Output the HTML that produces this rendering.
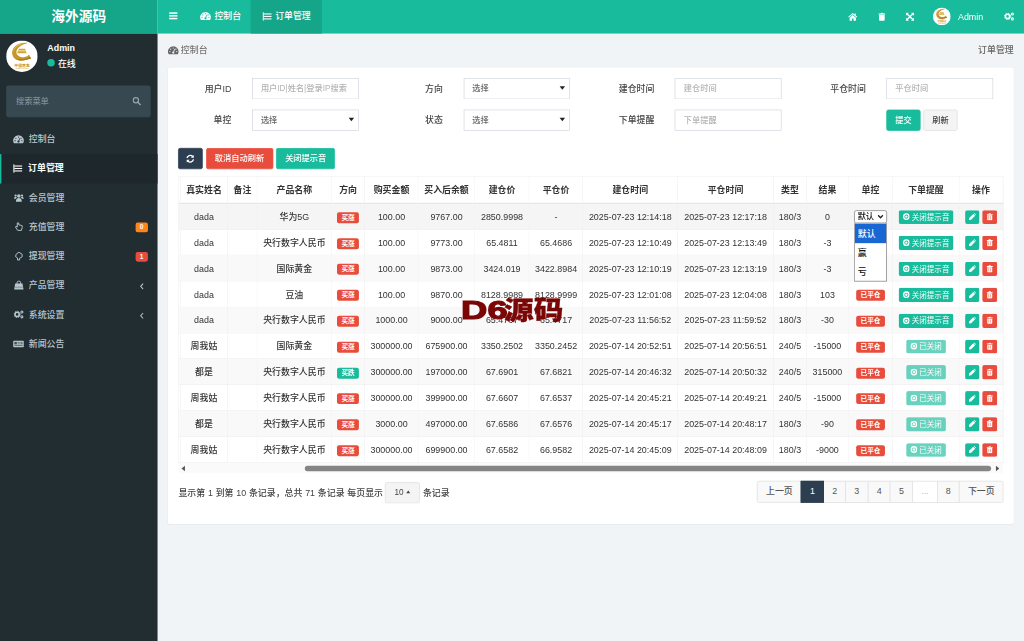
<!DOCTYPE html>
<html lang="zh-CN"><head><meta charset="utf-8"><title>海外源码</title>
<style>
html,body{margin:0;padding:0;width:1024px;height:641px;overflow:hidden;background:#f1f4f6}
#app{position:absolute;left:0;top:0;width:1495px;height:936px;transform:scale(0.684950);transform-origin:0 0;font-family:"Liberation Sans","Noto Sans CJK SC",sans-serif;font-size:13px;color:#444;line-height:1.42857;font-weight:500}
#app *{box-sizing:border-box}
.abs{position:absolute}
svg.ic{display:inline-block;vertical-align:middle}
#logo{position:absolute;left:0;top:0;width:230px;height:49.3px;background:#15a589;color:#fff;font-size:20px;font-weight:700;line-height:47.5px;text-align:center}
#nav{position:absolute;left:230px;top:0;width:1265px;height:49.3px;background:#18bc9c}
#side{position:absolute;left:0;top:49.3px;width:230px;height:887px;background:#222d32}
.tab{position:absolute;top:0;height:49.3px;line-height:47.6px;color:#fff;font-size:13px;white-space:nowrap}
.tab svg{margin-right:5px;position:relative;top:-1px}
.mi{position:absolute;left:0;width:230px;height:42.7px;color:#b8c7ce;font-size:13px;line-height:42.7px}
.mi.act{background:#1e282c;color:#fff;font-weight:700;border-left:2.5px solid #18bc9c}
.mi .mic{position:absolute;left:19px;top:0;width:16px;text-align:center}
.mi.act .mic{left:16px}
.mi .mt{position:absolute;left:42px;top:0}
.mi.act .mt{left:39px}
.mi svg.ic{position:relative;top:-1px}
.bdg{position:absolute;left:198px;top:14.5px;width:17.5px;height:14px;border-radius:3px;color:#fff;font-size:9.5px;font-weight:700;line-height:14px;text-align:center}
.chev{position:absolute;left:204px;top:17px}
#panel{position:absolute;left:245px;top:98.5px;width:1235px;height:666.2px;background:#fff;border-radius:3px;box-shadow:0 1px 1px rgba(0,0,0,.04)}
.flab{position:absolute;height:31px;line-height:31px;text-align:right;font-size:13px;color:#444;white-space:nowrap}
.fctl{position:absolute;height:31px;white-space:nowrap}
.inp{width:155.8px;height:31px;border:1px solid #d2d6de;border-radius:0;background:#fff;padding:0 12px;line-height:29px;font-size:12px;color:#b4b4b4;position:relative;overflow:hidden}
.inp em{font-style:normal;color:#666}
.inp.sel i{position:absolute;right:6px;top:11.5px;width:0;height:0;border-left:4px solid transparent;border-right:4px solid transparent;border-top:5px solid #222}
.btn{display:inline-block;height:31px;line-height:29px;padding:0 12px;font-size:12px;border:1px solid transparent;border-radius:3px;color:#fff;vertical-align:top;white-space:nowrap}
.b-g{background:#18bc9c;border-color:#18bc9c}
.b-r{background:#e74c3c;border-color:#e74c3c}
.b-k{background:#2c3e50;border-color:#2c3e50}
.b-d{background:#f4f4f4;border-color:#ddd;color:#444}
.tb{position:absolute;left:260.1px;top:257.3px;border-collapse:separate;border-spacing:0;table-layout:fixed;font-size:13px;color:#333;border-top:1px solid #efefef;border-left:1px solid #efefef}
.tb th,.tb td{border-right:1px solid #f0f0f0;border-bottom:1px solid #f0f0f0;text-align:center;white-space:nowrap;padding:0;overflow:hidden;vertical-align:middle}
.tb th{height:39.5px;font-weight:700;color:#333;border-bottom:2px solid #e6e6e6;background:#fff;padding-top:2.5px}
.tb td{height:37.79px;padding-top:2.8px}
.tb tr.odd td{background:#f9f9f9}
.tb tr.hov td{background:#f5f5f5}
.tb tr.even td{background:#fff}
.tb tr.odd td.sl{border-right-color:transparent}
.lb{display:inline-block;font-size:9.75px;font-weight:700;color:#fff;line-height:1;padding:2.9px 6.1px 3.3px;border-radius:3px;vertical-align:middle}
.lb-r{background:#e74c3c}
.lb-g{background:#18bc9c}
.bx{display:inline-block;height:20.8px;line-height:18.8px;position:relative;top:-0.6px;border-radius:3px;color:#fff;font-size:11px;padding:0 5px;vertical-align:middle;border:1px solid transparent;white-space:nowrap}
.bx b{font-weight:400;margin-left:3px;vertical-align:middle}
.bx svg.ic{position:relative;top:-1px}
.bx-g{background:#18bc9c}
.bx-r{background:#e74c3c}
.bx.off{opacity:.65}
.bx.sq{width:21.3px;padding:0;text-align:center}
.nsel{display:inline-block;position:relative;border:1px solid #767676;border-radius:3px;background:#fff;width:47.4px;height:19.2px;line-height:17.2px;font-size:12px;color:#111;padding:0 0 0 4px;text-align:left;vertical-align:middle;top:-1.2px}
.pg{position:absolute;top:701.5px;height:32px;line-height:28.4px;border:1px solid #ddd;text-align:center;background:#f9f9f9;color:#555;font-size:13px;vertical-align:top}
.pg.act{background:#2c3e50;border-color:#2c3e50;color:#fff;z-index:2}
.pg.dis{background:#fff;color:#bbb}
.pg.first{border-radius:3px 0 0 3px}
.pg.last{border-radius:0 3px 3px 0}
</style></head><body>
<div id="app">
<div id="nav">
  <div class="abs" style="left:16px;top:16.3px;line-height:0"><svg class="ic" width="14" height="14" viewBox="0 0 14 14" style=""><rect x="1" y="2" width="12" height="2.2" fill="#fff"/><rect x="1" y="6" width="12" height="2.2" fill="#fff"/><rect x="1" y="10" width="12" height="2.2" fill="#fff"/></svg></div>
  <div class="tab" style="left:62px"><svg class="ic" width="16" height="15" viewBox="0 0 15 14" style=""><path d="M7.5 1.4 A7.2 7.2 0 0 0 1.3 12.4 L13.7 12.4 A7.2 7.2 0 0 0 7.5 1.4Z" fill="#fff"/><circle cx="7.5" cy="3.8" r="0.8" fill="#18bc9c"/><circle cx="3.9" cy="5.4" r="0.8" fill="#18bc9c"/><circle cx="11.1" cy="5.4" r="0.8" fill="#18bc9c"/><circle cx="2.8" cy="8.7" r="0.8" fill="#18bc9c"/><circle cx="12.2" cy="8.7" r="0.8" fill="#18bc9c"/><path d="M9.4 5.4 L7.9 9.2" stroke="#18bc9c" stroke-width="1.1" stroke-linecap="round"/><circle cx="7.5" cy="10" r="1.5" fill="#18bc9c"/></svg>控制台</div>
  <div class="tab" style="left:135.7px;width:104.3px;background:#15a589;padding-left:17px"><svg class="ic" width="14" height="14" viewBox="0 0 14 14" style=""><rect x="0.5" y="1" width="1.6" height="12" fill="#fff"/><rect x="2" y="2.6" width="11.5" height="1.6" fill="#fff"/><rect x="2" y="6.2" width="11.5" height="1.6" fill="#fff"/><rect x="2" y="9.8" width="11.5" height="1.6" fill="#fff"/></svg>订单管理</div>
  <div class="abs" style="left:1008px;top:18px;line-height:0"><svg class="ic" width="14" height="13" viewBox="0 0 14 13" style=""><path d="M7 0.8 L0.4 6.6 L1.4 7.6 L7 2.9 L12.6 7.6 L13.6 6.6 L11.4 4.6 L11.4 1.6 L9.8 1.6 L9.8 3.2 Z" fill="#fff"/><path d="M7 4 L2.4 7.9 L2.4 12.2 L5.8 12.2 L5.8 9 L8.2 9 L8.2 12.2 L11.6 12.2 L11.6 7.9 Z" fill="#fff"/></svg></div>
  <div class="abs" style="left:1052px;top:18px;line-height:0"><svg class="ic" width="11" height="13" viewBox="0 0 11 13" style=""><path d="M3.6 1.6 L4.2 0.6 L6.8 0.6 L7.4 1.6 L10.4 1.6 L10.4 3 L0.6 3 L0.6 1.6 Z" fill="#fff"/><path d="M1.4 3.6 L9.6 3.6 L9.6 11.2 A1.2 1.2 0 0 1 8.4 12.4 L2.6 12.4 A1.2 1.2 0 0 1 1.4 11.2 Z" fill="#fff"/></svg></div>
  <div class="abs" style="left:1091.5px;top:18px;line-height:0"><svg class="ic" width="13" height="13" viewBox="0 0 13 13" style=""><path d="M0.6 0.6 L5 0.6 L3.5 2.1 L6.5 5.1 L9.5 2.1 L8 0.6 L12.4 0.6 L12.4 5 L10.9 3.5 L7.9 6.5 L10.9 9.5 L12.4 8 L12.4 12.4 L8 12.4 L9.5 10.9 L6.5 7.9 L3.5 10.9 L5 12.4 L0.6 12.4 L0.6 8 L2.1 9.5 L5.1 6.5 L2.1 3.5 L0.6 5 Z" fill="#fff"/></svg></div>
  <div class="abs" style="left:1132.3px;top:11.3px"><svg width="26" height="26" viewBox="0 0 45 45" style="display:block"><circle cx="22.5" cy="22.5" r="22.5" fill="#fff"/><path d="M31 3.6 C17 1.5 7.5 10 8.6 19 C9.6 27 18 30.6 26 28.4 L35.5 25.8 L32.6 20.2 C29.5 24.5 22.5 25.6 17.4 22 C11.5 17.5 14.5 7.5 31 3.6Z" fill="#c8952c"/><path d="M27 4 C17 3 10 10 10.2 18 C11 11 17 6 27 4Z" fill="#e6c15a"/><path d="M14 25.5 C18 29.5 24 29.6 35.5 25.8 L34.4 23.6 C27 27.5 19 28 14 25.5Z" fill="#a8761a"/><path d="M18.2 11.8 L27 11.8 L29.2 18.4 L15.6 18.4Z" fill="#d4a437"/><path d="M17.4 14.2 L28 14.2 L28.4 15.4 L17 15.4Z" fill="#f3e2a0"/><text x="22.7" y="37.4" text-anchor="middle" font-size="5.6" font-weight="700" fill="#c8952c" font-family="'Liberation Sans','Noto Sans CJK SC',sans-serif">中国黄金</text><text x="22.7" y="41.4" text-anchor="middle" font-size="3" font-weight="700" fill="#d4a437" font-family="'Liberation Sans',sans-serif">CHINA GOLD</text></svg></div>
  <div class="abs" style="left:1168.6px;top:0;line-height:50px;color:#fff;font-size:13px">Admin</div>
  <div class="abs" style="left:1236px;top:17px;line-height:0"><svg class="ic" width="15" height="14" viewBox="0 0 15 14" style=""><circle cx="5" cy="7" r="3.1" fill="none" stroke="#fff" stroke-width="2.3"/><circle cx="5" cy="7" r="4.6" fill="none" stroke="#fff" stroke-width="1.4" stroke-dasharray="1.8 1.8"/><circle cx="12" cy="3.4" r="1.5" fill="none" stroke="#fff" stroke-width="1.5"/><circle cx="12" cy="10.6" r="1.5" fill="none" stroke="#fff" stroke-width="1.5"/></svg></div>
</div>
<div id="logo">海外源码</div>
<div id="side">
  <div class="abs" style="left:8.7px;top:9.9px"><svg width="46" height="46" viewBox="0 0 45 45" style="display:block"><circle cx="22.5" cy="22.5" r="22.5" fill="#fff"/><path d="M31 3.6 C17 1.5 7.5 10 8.6 19 C9.6 27 18 30.6 26 28.4 L35.5 25.8 L32.6 20.2 C29.5 24.5 22.5 25.6 17.4 22 C11.5 17.5 14.5 7.5 31 3.6Z" fill="#c8952c"/><path d="M27 4 C17 3 10 10 10.2 18 C11 11 17 6 27 4Z" fill="#e6c15a"/><path d="M14 25.5 C18 29.5 24 29.6 35.5 25.8 L34.4 23.6 C27 27.5 19 28 14 25.5Z" fill="#a8761a"/><path d="M18.2 11.8 L27 11.8 L29.2 18.4 L15.6 18.4Z" fill="#d4a437"/><path d="M17.4 14.2 L28 14.2 L28.4 15.4 L17 15.4Z" fill="#f3e2a0"/><text x="22.7" y="37.4" text-anchor="middle" font-size="5.6" font-weight="700" fill="#c8952c" font-family="'Liberation Sans','Noto Sans CJK SC',sans-serif">中国黄金</text><text x="22.7" y="41.4" text-anchor="middle" font-size="3" font-weight="700" fill="#d4a437" font-family="'Liberation Sans',sans-serif">CHINA GOLD</text></svg></div>
  <div class="abs" style="left:69px;top:13.1px;color:#fff;font-weight:700;font-size:13px">Admin</div>
  <div class="abs" style="left:69.3px;top:37.2px;width:11px;height:11px;border-radius:50%;background:#18bc9c"></div>
  <div class="abs" style="left:84.5px;top:35.9px;color:#fff;font-size:13px">在线</div>
  <div class="abs" style="left:8.8px;top:75.7px;width:211.6px;height:46.5px;background:#374850;border-radius:3px">
     <span class="abs" style="left:14.5px;top:0;line-height:46.5px;font-size:12px;color:#7d8c94">搜索菜单</span>
     <span class="abs" style="left:184px;top:16px;line-height:0"><svg class="ic" width="13" height="13" viewBox="0 0 13 13" style=""><circle cx="5.4" cy="5.4" r="3.8" fill="none" stroke="#97a5ad" stroke-width="1.7"/><path d="M8.3 8.3 L11.8 11.8" stroke="#97a5ad" stroke-width="2" stroke-linecap="round"/></svg></span>
  </div>
</div>
<div id="menu" class="abs" style="left:0;top:0"><div class="mi" style="top:182.6px"><span class="mic"><svg class="ic" width="16" height="15" viewBox="0 0 15 14" style=""><path d="M7.5 1.4 A7.2 7.2 0 0 0 1.3 12.4 L13.7 12.4 A7.2 7.2 0 0 0 7.5 1.4Z" fill="#b8c7ce"/><circle cx="7.5" cy="3.8" r="0.8" fill="#222d32"/><circle cx="3.9" cy="5.4" r="0.8" fill="#222d32"/><circle cx="11.1" cy="5.4" r="0.8" fill="#222d32"/><circle cx="2.8" cy="8.7" r="0.8" fill="#222d32"/><circle cx="12.2" cy="8.7" r="0.8" fill="#222d32"/><path d="M9.4 5.4 L7.9 9.2" stroke="#222d32" stroke-width="1.1" stroke-linecap="round"/><circle cx="7.5" cy="10" r="1.5" fill="#222d32"/></svg></span><span class="mt">控制台</span></div><div class="mi act" style="top:225.3px"><span class="mic"><svg class="ic" width="14" height="14" viewBox="0 0 14 14" style=""><rect x="0.5" y="1" width="1.6" height="12" fill="#fff"/><rect x="2" y="2.6" width="11.5" height="1.6" fill="#fff"/><rect x="2" y="6.2" width="11.5" height="1.6" fill="#fff"/><rect x="2" y="9.8" width="11.5" height="1.6" fill="#fff"/></svg></span><span class="mt">订单管理</span></div><div class="mi" style="top:268.0px"><span class="mic"><svg class="ic" width="15" height="14" viewBox="0 0 15 14" style=""><circle cx="7.5" cy="4.2" r="2.6" fill="#b8c7ce"/><path d="M3.2 12.5 C3.2 8.5 5 7.2 7.5 7.2 C10 7.2 11.8 8.5 11.8 12.5 Z" fill="#b8c7ce"/><circle cx="2.8" cy="3.6" r="1.7" fill="#b8c7ce"/><circle cx="12.2" cy="3.6" r="1.7" fill="#b8c7ce"/><path d="M0.3 8.3 C0.3 6.3 1.3 5.6 2.8 5.6 C3.6 5.6 4.2 5.8 4.6 6.2 C3.6 6.8 3.1 7.6 2.9 8.3Z" fill="#b8c7ce"/><path d="M14.7 8.3 C14.7 6.3 13.7 5.6 12.2 5.6 C11.4 5.6 10.8 5.8 10.4 6.2 C11.4 6.8 11.9 7.6 12.1 8.3Z" fill="#b8c7ce"/></svg></span><span class="mt">会员管理</span></div><div class="mi" style="top:310.7px"><span class="mic"><svg class="ic" width="13" height="14" viewBox="0 0 13 14" style=""><path d="M4.2 1.5 L4.2 7.5 L2.6 6.3 L1.5 7.4 L4.8 12.3 L10.3 12.3 L11.4 8 L11.4 5.6 L9.8 5 L8.4 4.6 L6.4 4.4 L6.4 1.5 Z" fill="none" stroke="#b8c7ce" stroke-width="1.4" stroke-linejoin="round"/></svg></span><span class="mt">充值管理</span><span class="bdg" style="background:#ff851b">0</span></div><div class="mi" style="top:353.4px"><span class="mic"><svg class="ic" width="13" height="14" viewBox="0 0 13 14" style=""><path d="M6.5 1.2 L11.3 4.2 L11.3 8 L7.6 10 L7.6 12.6 L4.6 12.6 L4.6 9.6 L1.7 7.6 L2.6 4.2 Z" fill="none" stroke="#b8c7ce" stroke-width="1.4" stroke-linejoin="round"/></svg></span><span class="mt">提现管理</span><span class="bdg" style="background:#e74c3c">1</span></div><div class="mi" style="top:396.1px"><span class="mic"><svg class="ic" width="15" height="15" viewBox="0 0 14 14" style=""><path d="M2 4.6 L12 4.6 L13.4 12.8 L0.6 12.8 Z" fill="#b8c7ce"/><path d="M4.6 6.2 L4.6 3.6 A2.4 2.4 0 0 1 9.4 3.6 L9.4 6.2" fill="none" stroke="#b8c7ce" stroke-width="1.3"/><path d="M1.3 9.6 L12.7 9.6" stroke="#222d32" stroke-width="0.7" opacity=".7"/></svg></span><span class="mt">产品管理</span><svg class="chev" width="6" height="10" viewBox="0 0 6 10"><path d="M5 1 L1.4 5 L5 9" fill="none" stroke="#b8c7ce" stroke-width="1.5"/></svg></div><div class="mi" style="top:438.8px"><span class="mic"><svg class="ic" width="15" height="14" viewBox="0 0 15 14" style=""><circle cx="5" cy="7" r="3.1" fill="none" stroke="#b8c7ce" stroke-width="2.3"/><circle cx="5" cy="7" r="4.6" fill="none" stroke="#b8c7ce" stroke-width="1.4" stroke-dasharray="1.8 1.8"/><circle cx="12" cy="3.4" r="1.5" fill="none" stroke="#b8c7ce" stroke-width="1.5"/><circle cx="12" cy="10.6" r="1.5" fill="none" stroke="#b8c7ce" stroke-width="1.5"/></svg></span><span class="mt">系统设置</span><svg class="chev" width="6" height="10" viewBox="0 0 6 10"><path d="M5 1 L1.4 5 L5 9" fill="none" stroke="#b8c7ce" stroke-width="1.5"/></svg></div><div class="mi" style="top:481.5px"><span class="mic"><svg class="ic" width="16" height="14" viewBox="0 0 16 14" style=""><rect x="0.3" y="2.4" width="15.4" height="9.6" rx="1" fill="#b8c7ce"/><rect x="2" y="4.2" width="3.6" height="3.6" fill="#222d32" opacity=".8"/><rect x="6.8" y="4.4" width="3" height="1" fill="#222d32" opacity=".8"/><rect x="6.8" y="6.6" width="3" height="1" fill="#222d32" opacity=".8"/><rect x="11" y="4.2" width="3" height="3.6" fill="#222d32" opacity=".55"/><rect x="2" y="9.2" width="12" height="1" fill="#222d32" opacity=".8"/></svg></span><span class="mt">新闻公告</span></div></div>

<div class="abs" style="left:245px;top:64px;line-height:18px;color:#777;font-size:13px"><svg class="ic" width="16" height="15" viewBox="0 0 15 14" style=""><path d="M7.5 1.4 A7.2 7.2 0 0 0 1.3 12.4 L13.7 12.4 A7.2 7.2 0 0 0 7.5 1.4Z" fill="#666"/><circle cx="7.5" cy="3.8" r="0.8" fill="#f1f4f6"/><circle cx="3.9" cy="5.4" r="0.8" fill="#f1f4f6"/><circle cx="11.1" cy="5.4" r="0.8" fill="#f1f4f6"/><circle cx="2.8" cy="8.7" r="0.8" fill="#f1f4f6"/><circle cx="12.2" cy="8.7" r="0.8" fill="#f1f4f6"/><path d="M9.4 5.4 L7.9 9.2" stroke="#f1f4f6" stroke-width="1.1" stroke-linecap="round"/><circle cx="7.5" cy="10" r="1.5" fill="#f1f4f6"/></svg><span style="margin-left:3px;vertical-align:middle">控制台</span></div>
<div class="abs" style="left:1380px;width:100px;text-align:right;top:64px;line-height:18px;color:#666;font-size:13px">订单管理</div>

<div id="panel"></div>
<div class="flab" style="left:260.00px;top:113.60000000000001px;width:77.90px">用户ID</div><div class="fctl" style="left:367.90px;top:113.9px"><div class="inp"><span>用户ID|姓名|登录IP搜索</span></div></div><div class="flab" style="left:568.75px;top:113.60000000000001px;width:77.90px">方向</div><div class="fctl" style="left:676.65px;top:113.9px"><div class="inp sel"><em>选择</em><i></i></div></div><div class="flab" style="left:877.50px;top:113.60000000000001px;width:77.90px">建仓时间</div><div class="fctl" style="left:985.40px;top:113.9px"><div class="inp"><span>建仓时间</span></div></div><div class="flab" style="left:1186.25px;top:113.60000000000001px;width:77.90px">平仓时间</div><div class="fctl" style="left:1294.15px;top:113.9px"><div class="inp"><span>平仓时间</span></div></div><div class="flab" style="left:260.00px;top:159.6px;width:77.90px">单控</div><div class="fctl" style="left:367.90px;top:159.9px"><div class="inp sel"><em>选择</em><i></i></div></div><div class="flab" style="left:568.75px;top:159.6px;width:77.90px">状态</div><div class="fctl" style="left:676.65px;top:159.9px"><div class="inp sel"><em>选择</em><i></i></div></div><div class="flab" style="left:877.50px;top:159.6px;width:77.90px">下单提醒</div><div class="fctl" style="left:985.40px;top:159.9px"><div class="inp"><span>下单提醒</span></div></div><div class="flab" style="left:1186.25px;top:159.6px;width:77.90px"></div><div class="fctl" style="left:1294.15px;top:159.9px"><span class="btn b-g">提交</span><span class="btn b-d" style="margin-left:4px">刷新</span></div>
<div class="abs" style="left:260px;top:216px;white-space:nowrap">
  <span class="btn b-k" style="width:36.3px;padding:0;text-align:center"><svg class="ic" width="13.5" height="13.5" viewBox="0 0 12 12" style=""><path d="M10.6 1 L10.6 4.8 L6.8 4.8 L8.2 3.4 A3.4 3.4 0 0 0 2.7 5.2 L0.9 5.2 A5.2 5.2 0 0 1 9.5 2.1 Z" fill="#fff"/><path d="M1.4 11 L1.4 7.2 L5.2 7.2 L3.8 8.6 A3.4 3.4 0 0 0 9.3 6.8 L11.1 6.8 A5.2 5.2 0 0 1 2.5 9.9 Z" fill="#fff"/></svg></span><span class="btn b-r" style="margin-left:4.4px">取消自动刷新</span><span class="btn b-g" style="margin-left:4.6px;padding:0 12px">关闭提示音</span>
</div>
<table class="tb" style="width:1203.59px"><colgroup><col style="width:2.77px"><col style="width:68.91px"><col style="width:43.21px"><col style="width:108.62px"><col style="width:48.32px"><col style="width:78.40px"><col style="width:82.20px"><col style="width:79.86px"><col style="width:77.96px"><col style="width:138.70px"><col style="width:139.57px"><col style="width:48.62px"><col style="width:60.73px"><col style="width:64.97px"><col style="width:97.09px"><col style="width:63.65px"></colgroup><thead><tr><th class="sl"></th><th>真实姓名</th><th>备注</th><th>产品名称</th><th>方向</th><th>购买金额</th><th>买入后余额</th><th>建仓价</th><th>平仓价</th><th>建仓时间</th><th>平仓时间</th><th>类型</th><th>结果</th><th>单控</th><th>下单提醒</th><th>操作</th></tr></thead><tbody><tr class="odd hov"><td class="sl"></td><td>dada</td><td></td><td>华为5G</td><td><span class="lb lb-r">买涨</span></td><td>100.00</td><td>9767.00</td><td>2850.9998</td><td>-</td><td>2025-07-23 12:14:18</td><td>2025-07-23 12:17:18</td><td>180/3</td><td>0</td><td><span class="nsel">默认<svg width="9" height="7" viewBox="0 0 9 7" style="position:absolute;right:3.5px;top:5.5px"><path d="M1 1.3 L4.5 4.9 L8 1.3" fill="none" stroke="#222" stroke-width="1.9"/></svg></span></td><td><span class="bx bx-g"><svg class="ic" width="10.5" height="10.5" viewBox="0 0 11 11" style=""><circle cx="5.5" cy="5.5" r="4.15" fill="none" stroke="#fff" stroke-width="2.1"/><circle cx="5.5" cy="5.5" r="1.8" fill="#fff"/></svg><b>关闭提示音</b></span></td><td><span class="bx bx-g sq"><svg class="ic" width="11" height="11" viewBox="0 0 11 11" style=""><path d="M0.6 10.4 L1 7.2 L6.9 1.3 L9.7 4.1 L3.8 10 Z" fill="#fff"/><path d="M7.6 0.6 L8.3 0 L11 2.7 L10.4 3.4 Z" fill="#fff"/></svg></span><span class="bx bx-r sq" style="margin-left:4px"><svg class="ic" width="10" height="11" viewBox="0 0 11 13" style=""><path d="M3.4 1.8 L4.1 0.4 L6.9 0.4 L7.6 1.8 L10.6 1.8 L10.6 3.2 L0.4 3.2 L0.4 1.8 Z" fill="#fff"/><path d="M1.2 3.8 L9.8 3.8 L9.8 11.4 A1.2 1.2 0 0 1 8.6 12.6 L2.4 12.6 A1.2 1.2 0 0 1 1.2 11.4 Z" fill="#fff"/><rect x="3.3" y="5.2" width="1.1" height="5.6" fill="#e74c3c" opacity=".75"/><rect x="6.6" y="5.2" width="1.1" height="5.6" fill="#e74c3c" opacity=".75"/></svg></span></td></tr>
<tr class="even"><td class="sl"></td><td>dada</td><td></td><td>央行数字人民币</td><td><span class="lb lb-r">买涨</span></td><td>100.00</td><td>9773.00</td><td>65.4811</td><td>65.4686</td><td>2025-07-23 12:10:49</td><td>2025-07-23 12:13:49</td><td>180/3</td><td>-3</td><td></td><td><span class="bx bx-g"><svg class="ic" width="10.5" height="10.5" viewBox="0 0 11 11" style=""><circle cx="5.5" cy="5.5" r="4.15" fill="none" stroke="#fff" stroke-width="2.1"/><circle cx="5.5" cy="5.5" r="1.8" fill="#fff"/></svg><b>关闭提示音</b></span></td><td><span class="bx bx-g sq"><svg class="ic" width="11" height="11" viewBox="0 0 11 11" style=""><path d="M0.6 10.4 L1 7.2 L6.9 1.3 L9.7 4.1 L3.8 10 Z" fill="#fff"/><path d="M7.6 0.6 L8.3 0 L11 2.7 L10.4 3.4 Z" fill="#fff"/></svg></span><span class="bx bx-r sq" style="margin-left:4px"><svg class="ic" width="10" height="11" viewBox="0 0 11 13" style=""><path d="M3.4 1.8 L4.1 0.4 L6.9 0.4 L7.6 1.8 L10.6 1.8 L10.6 3.2 L0.4 3.2 L0.4 1.8 Z" fill="#fff"/><path d="M1.2 3.8 L9.8 3.8 L9.8 11.4 A1.2 1.2 0 0 1 8.6 12.6 L2.4 12.6 A1.2 1.2 0 0 1 1.2 11.4 Z" fill="#fff"/><rect x="3.3" y="5.2" width="1.1" height="5.6" fill="#e74c3c" opacity=".75"/><rect x="6.6" y="5.2" width="1.1" height="5.6" fill="#e74c3c" opacity=".75"/></svg></span></td></tr>
<tr class="odd"><td class="sl"></td><td>dada</td><td></td><td>国际黄金</td><td><span class="lb lb-r">买涨</span></td><td>100.00</td><td>9873.00</td><td>3424.019</td><td>3422.8984</td><td>2025-07-23 12:10:19</td><td>2025-07-23 12:13:19</td><td>180/3</td><td>-3</td><td></td><td><span class="bx bx-g"><svg class="ic" width="10.5" height="10.5" viewBox="0 0 11 11" style=""><circle cx="5.5" cy="5.5" r="4.15" fill="none" stroke="#fff" stroke-width="2.1"/><circle cx="5.5" cy="5.5" r="1.8" fill="#fff"/></svg><b>关闭提示音</b></span></td><td><span class="bx bx-g sq"><svg class="ic" width="11" height="11" viewBox="0 0 11 11" style=""><path d="M0.6 10.4 L1 7.2 L6.9 1.3 L9.7 4.1 L3.8 10 Z" fill="#fff"/><path d="M7.6 0.6 L8.3 0 L11 2.7 L10.4 3.4 Z" fill="#fff"/></svg></span><span class="bx bx-r sq" style="margin-left:4px"><svg class="ic" width="10" height="11" viewBox="0 0 11 13" style=""><path d="M3.4 1.8 L4.1 0.4 L6.9 0.4 L7.6 1.8 L10.6 1.8 L10.6 3.2 L0.4 3.2 L0.4 1.8 Z" fill="#fff"/><path d="M1.2 3.8 L9.8 3.8 L9.8 11.4 A1.2 1.2 0 0 1 8.6 12.6 L2.4 12.6 A1.2 1.2 0 0 1 1.2 11.4 Z" fill="#fff"/><rect x="3.3" y="5.2" width="1.1" height="5.6" fill="#e74c3c" opacity=".75"/><rect x="6.6" y="5.2" width="1.1" height="5.6" fill="#e74c3c" opacity=".75"/></svg></span></td></tr>
<tr class="even"><td class="sl"></td><td>dada</td><td></td><td>豆油</td><td><span class="lb lb-r">买涨</span></td><td>100.00</td><td>9870.00</td><td>8128.9989</td><td>8128.9999</td><td>2025-07-23 12:01:08</td><td>2025-07-23 12:04:08</td><td>180/3</td><td>103</td><td><span class="lb lb-r">已平仓</span></td><td><span class="bx bx-g"><svg class="ic" width="10.5" height="10.5" viewBox="0 0 11 11" style=""><circle cx="5.5" cy="5.5" r="4.15" fill="none" stroke="#fff" stroke-width="2.1"/><circle cx="5.5" cy="5.5" r="1.8" fill="#fff"/></svg><b>关闭提示音</b></span></td><td><span class="bx bx-g sq"><svg class="ic" width="11" height="11" viewBox="0 0 11 11" style=""><path d="M0.6 10.4 L1 7.2 L6.9 1.3 L9.7 4.1 L3.8 10 Z" fill="#fff"/><path d="M7.6 0.6 L8.3 0 L11 2.7 L10.4 3.4 Z" fill="#fff"/></svg></span><span class="bx bx-r sq" style="margin-left:4px"><svg class="ic" width="10" height="11" viewBox="0 0 11 13" style=""><path d="M3.4 1.8 L4.1 0.4 L6.9 0.4 L7.6 1.8 L10.6 1.8 L10.6 3.2 L0.4 3.2 L0.4 1.8 Z" fill="#fff"/><path d="M1.2 3.8 L9.8 3.8 L9.8 11.4 A1.2 1.2 0 0 1 8.6 12.6 L2.4 12.6 A1.2 1.2 0 0 1 1.2 11.4 Z" fill="#fff"/><rect x="3.3" y="5.2" width="1.1" height="5.6" fill="#e74c3c" opacity=".75"/><rect x="6.6" y="5.2" width="1.1" height="5.6" fill="#e74c3c" opacity=".75"/></svg></span></td></tr>
<tr class="odd"><td class="sl"></td><td>dada</td><td></td><td>央行数字人民币</td><td><span class="lb lb-r">买涨</span></td><td>1000.00</td><td>9000.00</td><td>65.4767</td><td>65.4717</td><td>2025-07-23 11:56:52</td><td>2025-07-23 11:59:52</td><td>180/3</td><td>-30</td><td><span class="lb lb-r">已平仓</span></td><td><span class="bx bx-g"><svg class="ic" width="10.5" height="10.5" viewBox="0 0 11 11" style=""><circle cx="5.5" cy="5.5" r="4.15" fill="none" stroke="#fff" stroke-width="2.1"/><circle cx="5.5" cy="5.5" r="1.8" fill="#fff"/></svg><b>关闭提示音</b></span></td><td><span class="bx bx-g sq"><svg class="ic" width="11" height="11" viewBox="0 0 11 11" style=""><path d="M0.6 10.4 L1 7.2 L6.9 1.3 L9.7 4.1 L3.8 10 Z" fill="#fff"/><path d="M7.6 0.6 L8.3 0 L11 2.7 L10.4 3.4 Z" fill="#fff"/></svg></span><span class="bx bx-r sq" style="margin-left:4px"><svg class="ic" width="10" height="11" viewBox="0 0 11 13" style=""><path d="M3.4 1.8 L4.1 0.4 L6.9 0.4 L7.6 1.8 L10.6 1.8 L10.6 3.2 L0.4 3.2 L0.4 1.8 Z" fill="#fff"/><path d="M1.2 3.8 L9.8 3.8 L9.8 11.4 A1.2 1.2 0 0 1 8.6 12.6 L2.4 12.6 A1.2 1.2 0 0 1 1.2 11.4 Z" fill="#fff"/><rect x="3.3" y="5.2" width="1.1" height="5.6" fill="#e74c3c" opacity=".75"/><rect x="6.6" y="5.2" width="1.1" height="5.6" fill="#e74c3c" opacity=".75"/></svg></span></td></tr>
<tr class="even"><td class="sl"></td><td>周我姑</td><td></td><td>国际黄金</td><td><span class="lb lb-r">买涨</span></td><td>300000.00</td><td>675900.00</td><td>3350.2502</td><td>3350.2452</td><td>2025-07-14 20:52:51</td><td>2025-07-14 20:56:51</td><td>240/5</td><td>-15000</td><td><span class="lb lb-r">已平仓</span></td><td><span class="bx bx-g off"><svg class="ic" width="10.5" height="10.5" viewBox="0 0 11 11" style=""><circle cx="5.5" cy="5.5" r="4.15" fill="none" stroke="#fff" stroke-width="2.1"/><circle cx="5.5" cy="5.5" r="1.8" fill="#fff"/></svg><b>已关闭</b></span></td><td><span class="bx bx-g sq"><svg class="ic" width="11" height="11" viewBox="0 0 11 11" style=""><path d="M0.6 10.4 L1 7.2 L6.9 1.3 L9.7 4.1 L3.8 10 Z" fill="#fff"/><path d="M7.6 0.6 L8.3 0 L11 2.7 L10.4 3.4 Z" fill="#fff"/></svg></span><span class="bx bx-r sq" style="margin-left:4px"><svg class="ic" width="10" height="11" viewBox="0 0 11 13" style=""><path d="M3.4 1.8 L4.1 0.4 L6.9 0.4 L7.6 1.8 L10.6 1.8 L10.6 3.2 L0.4 3.2 L0.4 1.8 Z" fill="#fff"/><path d="M1.2 3.8 L9.8 3.8 L9.8 11.4 A1.2 1.2 0 0 1 8.6 12.6 L2.4 12.6 A1.2 1.2 0 0 1 1.2 11.4 Z" fill="#fff"/><rect x="3.3" y="5.2" width="1.1" height="5.6" fill="#e74c3c" opacity=".75"/><rect x="6.6" y="5.2" width="1.1" height="5.6" fill="#e74c3c" opacity=".75"/></svg></span></td></tr>
<tr class="odd"><td class="sl"></td><td>都是</td><td></td><td>央行数字人民币</td><td><span class="lb lb-g">买跌</span></td><td>300000.00</td><td>197000.00</td><td>67.6901</td><td>67.6821</td><td>2025-07-14 20:46:32</td><td>2025-07-14 20:50:32</td><td>240/5</td><td>315000</td><td><span class="lb lb-r">已平仓</span></td><td><span class="bx bx-g off"><svg class="ic" width="10.5" height="10.5" viewBox="0 0 11 11" style=""><circle cx="5.5" cy="5.5" r="4.15" fill="none" stroke="#fff" stroke-width="2.1"/><circle cx="5.5" cy="5.5" r="1.8" fill="#fff"/></svg><b>已关闭</b></span></td><td><span class="bx bx-g sq"><svg class="ic" width="11" height="11" viewBox="0 0 11 11" style=""><path d="M0.6 10.4 L1 7.2 L6.9 1.3 L9.7 4.1 L3.8 10 Z" fill="#fff"/><path d="M7.6 0.6 L8.3 0 L11 2.7 L10.4 3.4 Z" fill="#fff"/></svg></span><span class="bx bx-r sq" style="margin-left:4px"><svg class="ic" width="10" height="11" viewBox="0 0 11 13" style=""><path d="M3.4 1.8 L4.1 0.4 L6.9 0.4 L7.6 1.8 L10.6 1.8 L10.6 3.2 L0.4 3.2 L0.4 1.8 Z" fill="#fff"/><path d="M1.2 3.8 L9.8 3.8 L9.8 11.4 A1.2 1.2 0 0 1 8.6 12.6 L2.4 12.6 A1.2 1.2 0 0 1 1.2 11.4 Z" fill="#fff"/><rect x="3.3" y="5.2" width="1.1" height="5.6" fill="#e74c3c" opacity=".75"/><rect x="6.6" y="5.2" width="1.1" height="5.6" fill="#e74c3c" opacity=".75"/></svg></span></td></tr>
<tr class="even"><td class="sl"></td><td>周我姑</td><td></td><td>央行数字人民币</td><td><span class="lb lb-r">买涨</span></td><td>300000.00</td><td>399900.00</td><td>67.6607</td><td>67.6537</td><td>2025-07-14 20:45:21</td><td>2025-07-14 20:49:21</td><td>240/5</td><td>-15000</td><td><span class="lb lb-r">已平仓</span></td><td><span class="bx bx-g off"><svg class="ic" width="10.5" height="10.5" viewBox="0 0 11 11" style=""><circle cx="5.5" cy="5.5" r="4.15" fill="none" stroke="#fff" stroke-width="2.1"/><circle cx="5.5" cy="5.5" r="1.8" fill="#fff"/></svg><b>已关闭</b></span></td><td><span class="bx bx-g sq"><svg class="ic" width="11" height="11" viewBox="0 0 11 11" style=""><path d="M0.6 10.4 L1 7.2 L6.9 1.3 L9.7 4.1 L3.8 10 Z" fill="#fff"/><path d="M7.6 0.6 L8.3 0 L11 2.7 L10.4 3.4 Z" fill="#fff"/></svg></span><span class="bx bx-r sq" style="margin-left:4px"><svg class="ic" width="10" height="11" viewBox="0 0 11 13" style=""><path d="M3.4 1.8 L4.1 0.4 L6.9 0.4 L7.6 1.8 L10.6 1.8 L10.6 3.2 L0.4 3.2 L0.4 1.8 Z" fill="#fff"/><path d="M1.2 3.8 L9.8 3.8 L9.8 11.4 A1.2 1.2 0 0 1 8.6 12.6 L2.4 12.6 A1.2 1.2 0 0 1 1.2 11.4 Z" fill="#fff"/><rect x="3.3" y="5.2" width="1.1" height="5.6" fill="#e74c3c" opacity=".75"/><rect x="6.6" y="5.2" width="1.1" height="5.6" fill="#e74c3c" opacity=".75"/></svg></span></td></tr>
<tr class="odd"><td class="sl"></td><td>都是</td><td></td><td>央行数字人民币</td><td><span class="lb lb-r">买涨</span></td><td>3000.00</td><td>497000.00</td><td>67.6586</td><td>67.6576</td><td>2025-07-14 20:45:17</td><td>2025-07-14 20:48:17</td><td>180/3</td><td>-90</td><td><span class="lb lb-r">已平仓</span></td><td><span class="bx bx-g off"><svg class="ic" width="10.5" height="10.5" viewBox="0 0 11 11" style=""><circle cx="5.5" cy="5.5" r="4.15" fill="none" stroke="#fff" stroke-width="2.1"/><circle cx="5.5" cy="5.5" r="1.8" fill="#fff"/></svg><b>已关闭</b></span></td><td><span class="bx bx-g sq"><svg class="ic" width="11" height="11" viewBox="0 0 11 11" style=""><path d="M0.6 10.4 L1 7.2 L6.9 1.3 L9.7 4.1 L3.8 10 Z" fill="#fff"/><path d="M7.6 0.6 L8.3 0 L11 2.7 L10.4 3.4 Z" fill="#fff"/></svg></span><span class="bx bx-r sq" style="margin-left:4px"><svg class="ic" width="10" height="11" viewBox="0 0 11 13" style=""><path d="M3.4 1.8 L4.1 0.4 L6.9 0.4 L7.6 1.8 L10.6 1.8 L10.6 3.2 L0.4 3.2 L0.4 1.8 Z" fill="#fff"/><path d="M1.2 3.8 L9.8 3.8 L9.8 11.4 A1.2 1.2 0 0 1 8.6 12.6 L2.4 12.6 A1.2 1.2 0 0 1 1.2 11.4 Z" fill="#fff"/><rect x="3.3" y="5.2" width="1.1" height="5.6" fill="#e74c3c" opacity=".75"/><rect x="6.6" y="5.2" width="1.1" height="5.6" fill="#e74c3c" opacity=".75"/></svg></span></td></tr>
<tr class="even"><td class="sl"></td><td>周我姑</td><td></td><td>央行数字人民币</td><td><span class="lb lb-r">买涨</span></td><td>300000.00</td><td>699900.00</td><td>67.6582</td><td>66.9582</td><td>2025-07-14 20:45:09</td><td>2025-07-14 20:48:09</td><td>180/3</td><td>-9000</td><td><span class="lb lb-r">已平仓</span></td><td><span class="bx bx-g off"><svg class="ic" width="10.5" height="10.5" viewBox="0 0 11 11" style=""><circle cx="5.5" cy="5.5" r="4.15" fill="none" stroke="#fff" stroke-width="2.1"/><circle cx="5.5" cy="5.5" r="1.8" fill="#fff"/></svg><b>已关闭</b></span></td><td><span class="bx bx-g sq"><svg class="ic" width="11" height="11" viewBox="0 0 11 11" style=""><path d="M0.6 10.4 L1 7.2 L6.9 1.3 L9.7 4.1 L3.8 10 Z" fill="#fff"/><path d="M7.6 0.6 L8.3 0 L11 2.7 L10.4 3.4 Z" fill="#fff"/></svg></span><span class="bx bx-r sq" style="margin-left:4px"><svg class="ic" width="10" height="11" viewBox="0 0 11 13" style=""><path d="M3.4 1.8 L4.1 0.4 L6.9 0.4 L7.6 1.8 L10.6 1.8 L10.6 3.2 L0.4 3.2 L0.4 1.8 Z" fill="#fff"/><path d="M1.2 3.8 L9.8 3.8 L9.8 11.4 A1.2 1.2 0 0 1 8.6 12.6 L2.4 12.6 A1.2 1.2 0 0 1 1.2 11.4 Z" fill="#fff"/><rect x="3.3" y="5.2" width="1.1" height="5.6" fill="#e74c3c" opacity=".75"/><rect x="6.6" y="5.2" width="1.1" height="5.6" fill="#e74c3c" opacity=".75"/></svg></span></td></tr></tbody></table>
<!-- scrollbar -->
<div class="abs" style="left:260.7px;top:675.6px;width:1203.3px;height:15.4px;background:#fafafa"></div>
<div class="abs" style="left:265px;top:679.5px;width:0;height:0;border-top:4px solid transparent;border-bottom:4px solid transparent;border-right:5px solid #555"></div>
<div class="abs" style="left:444.5px;top:679.5px;width:1002.5px;height:8px;border-radius:4px;background:#858585"></div>
<div class="abs" style="left:1454px;top:679.5px;width:0;height:0;border-top:4px solid transparent;border-bottom:4px solid transparent;border-left:5px solid #555"></div>

<div class="abs" style="left:260.5px;top:704px;line-height:31px;white-space:nowrap;color:#444;font-size:13px;word-spacing:0.45px">显示第 1 到第 10 条记录，总共 71 条记录 每页显示</div>
<span class="btn b-d abs" style="left:562px;top:703.5px;width:50.6px;padding:0;text-align:center">10 <i style="display:inline-block;width:0;height:0;border-left:3.5px solid transparent;border-right:3.5px solid transparent;border-bottom:4px solid #444;vertical-align:middle;margin-top:-2px"></i></span>
<div class="abs" style="left:617.5px;top:704px;line-height:31px;white-space:nowrap;color:#444;font-size:13px">条记录</div>
<span class="pg first" style="left:1105.48px;width:64.95px">上一页</span><span class="pg act" style="left:1169.43px;width:33.85px">1</span><span class="pg " style="left:1202.28px;width:32.97px">2</span><span class="pg " style="left:1234.25px;width:33.41px">3</span><span class="pg " style="left:1266.66px;width:33.70px">4</span><span class="pg " style="left:1299.37px;width:33.41px">5</span><span class="pg dis" style="left:1331.78px;width:37.06px">...</span><span class="pg " style="left:1367.84px;width:33.27px">8</span><span class="pg last" style="left:1400.10px;width:65.09px">下一页</span>

<!-- native select popup -->
<div class="abs" style="left:1247.3px;top:326.4px;width:47.4px;height:84.4px;background:#fff;border:1px solid #767676;font-size:13px;color:#111;line-height:29.6px;overflow:hidden">
  <div style="background:#1967d2;color:#fff;padding-left:4px;height:27.5px;overflow:hidden">默认</div>
  <div style="padding-left:4px;height:27.5px;overflow:hidden">赢</div>
  <div style="padding-left:4px;height:27.5px;overflow:hidden">亏</div>
</div>

<!-- watermark -->
<div class="abs" style="left:672.8px;top:425px;font-size:37px;font-weight:900;color:#7a0606;line-height:54px;white-space:nowrap"><span style="display:inline-block;transform:scaleX(1.36);transform-origin:0 50%;width:63.3px;-webkit-text-stroke:1.7px #7a0606;letter-spacing:0.3px;font-size:39px;position:relative;top:1px">D6</span><span style="display:inline-block;transform:scaleX(1.17);transform-origin:0 50%;-webkit-text-stroke:0.5px #7a0606">源码</span></div>
</div>
</body></html>
